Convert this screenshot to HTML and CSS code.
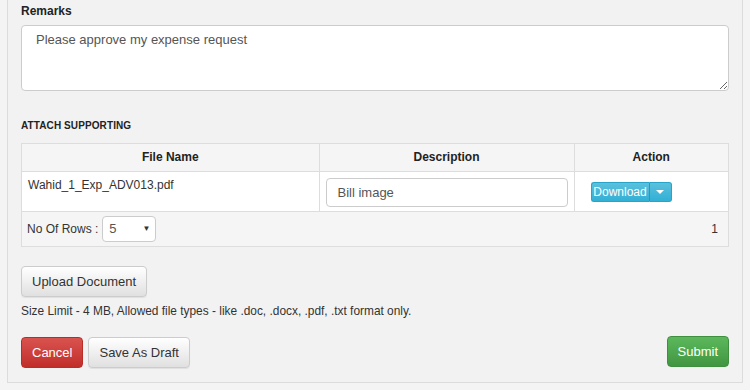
FILE: index.html
```html
<!DOCTYPE html>
<html lang="en">
<head>
    <meta charset="UTF-8">
    <meta name="viewport" content="width=device-width, initial-scale=1.0">
    <title>Expense Request - Attachments</title>
    <link rel="stylesheet" href="styles.css">
</head>
<body>
    <div class="panel">
        <div class="form-group">
            <label for="remarks">Remarks</label>
            <textarea id="remarks" class="form-control remarks">Please approve my expense request</textarea>
        </div>

        <h4 class="section-title">Attach Supporting</h4>

        <div class="grid">
            <table class="grid-table">
                <colgroup>
                    <col class="col-name">
                    <col class="col-desc">
                    <col class="col-action">
                </colgroup>
                <thead>
                    <tr>
                        <th>File Name</th>
                        <th>Description</th>
                        <th>Action</th>
                    </tr>
                </thead>
                <tbody>
                    <tr>
                        <td class="file-name">Wahid_1_Exp_ADV013.pdf</td>
                        <td><input type="text" class="form-control desc-input" value="Bill image"></td>
                        <td class="action-cell">
                            <div class="btn-split">
                                <button class="btn-info main">Download</button>
                                <button class="btn-info caret-btn"><span class="caret"></span></button>
                            </div>
                        </td>
                    </tr>
                </tbody>
            </table>
            <div class="grid-footer">
                <div class="rows">
                    <span>No Of Rows :</span>
                    <div class="select">
                        <span>5</span>
                        <span class="arrow">&#9660;</span>
                    </div>
                </div>
                <div class="page">1</div>
            </div>
        </div>

        <button class="btn btn-default upload">Upload Document</button>
        <p class="hint">Size Limit - 4 MB, Allowed file types - like .doc, .docx, .pdf, .txt format only.</p>

        <div class="form-buttons">
            <div class="left-buttons">
                <button class="btn btn-danger">Cancel</button>
                <button class="btn btn-default">Save As Draft</button>
            </div>
            <button class="btn btn-success">Submit</button>
        </div>
    </div>
</body>
</html>
```

FILE: styles.css
```css
* {
    margin: 0;
    padding: 0;
    box-sizing: border-box;
    font-family: "Liberation Sans", Arial, sans-serif;
}

body {
    background-color: #f4f4f4;
    color: #333;
    font-size: 13px;
}

.panel {
    margin: 0 7px;
    height: 383px;
    padding: 4px 13px 0 13px;
    background-color: #f2f2f2;
    border: 1px solid #dcdcdc;
    border-top: none;
}

.form-group label {
    display: block;
    font-weight: bold;
    font-size: 12px;
    color: #222;
    margin-bottom: 7px;
}

.form-control {
    display: block;
    width: 100%;
    padding: 6px 12px;
    font-size: 13px;
    color: #555;
    background-color: #fff;
    border: 1px solid #ccc;
    border-radius: 4px;
}

.remarks {
    height: 66px;
    padding: 6px 14px;
    resize: vertical;
}

.section-title {
    font-size: 10px;
    font-weight: bold;
    text-transform: uppercase;
    color: #222;
    margin: 29px 0 12px;
    letter-spacing: 0.1px;
}

.grid {
    border: 1px solid #ddd;
    background-color: #f5f5f5;
}

.grid-table {
    width: 100%;
    border-collapse: collapse;
    table-layout: fixed;
}

.col-name {
    width: 297px;
}

.col-desc {
    width: 255px;
}

.grid-table th {
    height: 27px;
    font-size: 12px;
    font-weight: bold;
    color: #222;
    text-align: center;
    border-right: 1px solid #ddd;
    border-bottom: 1px solid #ddd;
}

.grid-table td {
    background-color: #fff;
    border-right: 1px solid #ddd;
    border-bottom: 1px solid #ddd;
    vertical-align: top;
    padding: 6px 6px 4px;
}

.grid-table th:last-child,
.grid-table td:last-child {
    border-right: none;
}

.file-name {
    font-size: 12px;
}

.desc-input {
    height: 29px;
    padding: 4px 11px;
    font-size: 13px;
}

.action-cell {
    padding-top: 10px !important;
    padding-left: 16px !important;
}

.btn-split {
    display: flex;
}

.btn-info {
    height: 20px;
    border: 1px solid #28a4c9;
    background: linear-gradient(#5bc0de, #31b0d5);
    color: #fff;
    font-size: 12px;
    cursor: pointer;
}

.btn-info.main {
    width: 59px;
    border-radius: 3px 0 0 3px;
    border-right: 1px solid #269abc;
}

.btn-info.caret-btn {
    width: 22px;
    border-left: none;
    border-radius: 0 3px 3px 0;
    display: flex;
    align-items: center;
    justify-content: center;
}

.caret {
    width: 0;
    height: 0;
    border-left: 4px solid transparent;
    border-right: 4px solid transparent;
    border-top: 4px solid #fff;
}

.grid-footer {
    display: flex;
    justify-content: space-between;
    align-items: center;
    height: 34px;
    padding: 0 10px 0 5px;
    font-size: 12px;
    color: #333;
}

.rows {
    display: flex;
    align-items: center;
    gap: 4px;
}

.select {
    display: flex;
    justify-content: space-between;
    align-items: center;
    width: 54px;
    height: 26px;
    padding: 0 5px 0 6px;
    background-color: #fff;
    border: 1px solid #ccc;
    border-radius: 4px;
    font-size: 13px;
    color: #555;
}

.select .arrow {
    font-size: 8px;
    color: #333;
}

.btn {
    padding: 6px 10px;
    font-size: 13px;
    border-radius: 4px;
    cursor: pointer;
    line-height: 17px;
    white-space: nowrap;
}

.btn-default {
    color: #333;
    background: linear-gradient(#fff, #e0e0e0);
    border: 1px solid #ccc;
    box-shadow: inset 0 1px 0 rgba(255, 255, 255, 0.15), 0 1px 1px rgba(0, 0, 0, 0.075);
}

.btn-danger {
    color: #fff;
    background: linear-gradient(#d9534f, #c12e2a);
    border: 1px solid #b92c28;
}

.btn-success {
    color: #fff;
    background: linear-gradient(#5cb85c, #419641);
    border: 1px solid #3e8f3e;
}

.upload {
    display: block;
    margin-top: 19px;
    height: 31px;
    padding: 6px 10px;
}

.hint {
    font-size: 11.9px;
    margin-top: 7px;
}

.form-buttons {
    display: flex;
    justify-content: space-between;
    align-items: flex-end;
    margin-top: 18px;
}

.left-buttons {
    display: flex;
    gap: 5px;
}

.left-buttons .btn {
    height: 31px;
}

.btn-success {
    height: 31px;
    margin-bottom: 1px;
}
```
